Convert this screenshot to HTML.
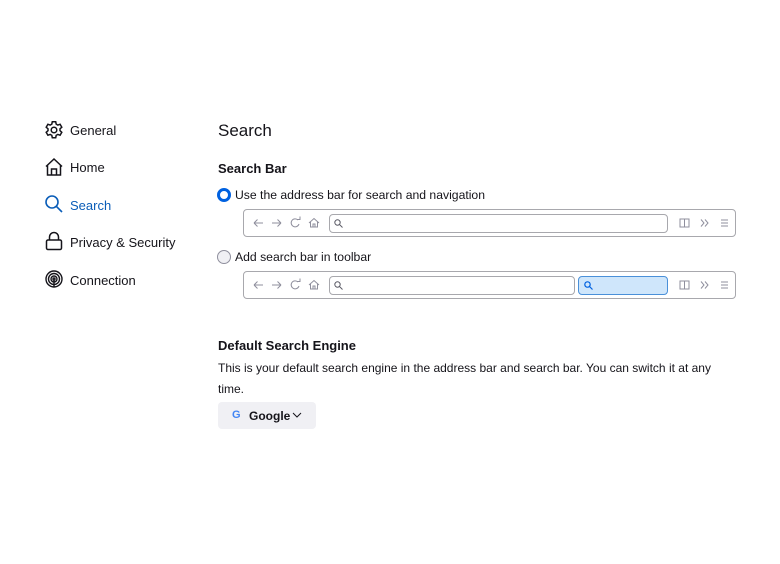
<!DOCTYPE html>
<html><head><meta charset="utf-8"><style>
body{margin:0;width:780px;height:564px;background:#fff;font-family:"Liberation Sans",sans-serif;color:#15141a;position:relative;overflow:hidden}
.a{position:absolute;white-space:nowrap}
.nav{font-size:13px}
.tb{position:absolute;left:243px;width:491px;height:26px;border:1px solid #a8a8ad;border-radius:4px;background:#fff}
.f{position:absolute;top:4px;height:17px;border:1px solid #a8a8ad;border-radius:4px;background:#fff}
svg{position:absolute}
</style></head><body>
<svg style="left:44px;top:120px" width="20" height="20" viewBox="0 0 20 20" fill="none" stroke="#15141a" stroke-width="1.5"><path d="M8.3 1.8h3.4l.5 2.4 1.6.9 2.3-.8 1.7 2.9-1.8 1.6v1.9l1.8 1.6-1.7 2.9-2.3-.8-1.6.9-.5 2.4H8.3l-.5-2.4-1.6-.9-2.3.8-1.7-2.9 1.8-1.6V8.8L2.2 7.2l1.7-2.9 2.3.8 1.6-.9z"/><circle cx="10" cy="10" r="2.8"/></svg>
<div class="a nav" style="left:70px;top:123px">General</div>
<svg style="left:44px;top:157px" width="20" height="20" viewBox="0 0 20 20" fill="none" stroke="#15141a" stroke-width="1.5"><path d="M2 9.5L10 2l8 7.5M3.5 8v10h13V8M7.5 18v-6h5v6"/></svg>
<div class="a nav" style="left:70px;top:160px">Home</div>
<svg style="left:44px;top:194px" width="20" height="20" viewBox="0 0 20 20" fill="none" stroke="#0a5db8" stroke-width="1.6"><circle cx="8" cy="8" r="6"/><path d="M12.3 12.3L18 18"/></svg>
<div class="a nav" style="left:70px;top:198px;color:#0a5db8">Search</div>
<svg style="left:44px;top:231px" width="20" height="20" viewBox="0 0 20 20" fill="none" stroke="#15141a" stroke-width="1.5"><path d="M5.5 9V6a4.5 4.5 0 0 1 9 0v3"/><rect x="2.5" y="9" width="15" height="9.5" rx="1.5"/></svg>
<div class="a nav" style="left:70px;top:235px">Privacy &amp; Security</div>
<svg style="left:44px;top:269px" width="20" height="20" viewBox="0 0 20 20" fill="none" stroke="#15141a" stroke-width="1.4"><circle cx="10" cy="10" r="8"/><circle cx="10" cy="10" r="5.5"/><circle cx="10" cy="10" r="3"/><circle cx="10" cy="10" r="1"/><path d="M10 11v7"/></svg>
<div class="a nav" style="left:70px;top:273px">Connection</div>

<div class="a" style="left:218px;top:121px;font-size:17px">Search</div>
<div class="a" style="left:218px;top:161px;font-size:13px;font-weight:bold">Search Bar</div>
<div class="a" style="left:217px;top:188px;width:8px;height:8px;border:3px solid #0061e0;border-radius:50%"></div>
<div class="a" style="left:235px;top:188px;font-size:12.2px">Use the address bar for search and navigation</div>
<div class="a" style="left:217px;top:250px;width:12px;height:12px;border:1px solid #8f8f9d;border-radius:50%;background:#f0f0f4"></div>
<div class="a" style="left:235px;top:250px;font-size:12.2px">Add search bar in toolbar</div>

<div class="tb" style="top:209px">
<svg style="left:0;top:0" width="492" height="26" fill="none" stroke="#8f8f9d" stroke-width="1"><path d="M10 13h9M10 13l3.5-3.5M10 13l3.5 3.5M28 13h9M37 13l-3.5-3.5M37 13l-3.5 3.5"/><path d="M54 10a4 4 0 1 0 1 4M53 9.5h3v-3"/><path d="M65 13l5-4.5 5 4.5M66.5 12v5h7v-5M69 17v-3h2v3"/><rect x="436" y="9" width="9" height="8"/><path d="M440.5 9v8M457 9.5l3 3.5-3 3.5M461 9.5l3 3.5-3 3.5M477 10h7M477 13h7M477 16h7"/></svg>
<div class="f" style="left:85px;width:337px"><svg style="left:4px;top:4px" width="9" height="9" fill="none" stroke="#5b5b66"><circle cx="3.5" cy="3.5" r="2.7"/><path d="M5.5 5.5L8.5 8.5"/></svg></div>
</div>
<div class="tb" style="top:271px">
<svg style="left:0;top:0" width="492" height="26" fill="none" stroke="#8f8f9d" stroke-width="1"><path d="M10 13h9M10 13l3.5-3.5M10 13l3.5 3.5M28 13h9M37 13l-3.5-3.5M37 13l-3.5 3.5"/><path d="M54 10a4 4 0 1 0 1 4M53 9.5h3v-3"/><path d="M65 13l5-4.5 5 4.5M66.5 12v5h7v-5M69 17v-3h2v3"/><rect x="436" y="9" width="9" height="8"/><path d="M440.5 9v8M457 9.5l3 3.5-3 3.5M461 9.5l3 3.5-3 3.5M477 10h7M477 13h7M477 16h7"/></svg>
<div class="f" style="left:85px;width:244px"><svg style="left:4px;top:4px" width="9" height="9" fill="none" stroke="#5b5b66"><circle cx="3.5" cy="3.5" r="2.7"/><path d="M5.5 5.5L8.5 8.5"/></svg></div>
<div class="f" style="left:334px;width:88px;background:#cfe6fb;border-color:#4a90d9"><svg style="left:5px;top:4px" width="9" height="9" fill="none" stroke="#0061e0" stroke-width="1.2"><circle cx="3.5" cy="3.5" r="2.7"/><path d="M5.5 5.5L8.5 8.5"/></svg></div>
</div>

<div class="a" style="left:218px;top:338px;font-size:13px;font-weight:bold">Default Search Engine</div>
<div class="a" style="left:218px;top:361px;font-size:12px">This is your default search engine in the address bar and search bar. You can switch it at any</div>
<div class="a" style="left:218px;top:382px;font-size:12px">time.</div>
<div class="a" style="left:218px;top:402px;width:98px;height:27px;background:#f0f0f4;border-radius:4px"></div>
<div class="a" style="left:232px;top:409px;font-size:11px;font-weight:bold"><span style="color:#4285f4">G</span></div>
<div class="a" style="left:249px;top:409px;font-size:12px;font-weight:bold">Google</div>
<svg style="left:292px;top:412px" width="10" height="6" fill="none" stroke="#15141a"><path d="M1 1l4 4 4-4"/></svg>
</body></html>
